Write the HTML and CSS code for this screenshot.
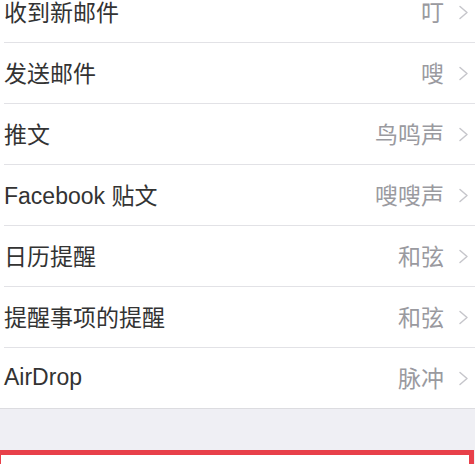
FILE: index.html
```html
<!DOCTYPE html>
<html lang="zh-CN">
<head>
<meta charset="utf-8">
<link rel="stylesheet" href="styles.css">
</head>
<body>
<div class="list">
  <div class="row"><span class="label">收到新邮件</span><span class="value">叮</span><svg class="chev" width="11" height="15" viewBox="0 0 11 15"><polyline points="2,1.5 9,7.5 2,13.5"/></svg></div>
  <div class="row"><span class="label">发送邮件</span><span class="value">嗖</span><svg class="chev" width="11" height="15" viewBox="0 0 11 15"><polyline points="2,1.5 9,7.5 2,13.5"/></svg></div>
  <div class="row"><span class="label">推文</span><span class="value">鸟鸣声</span><svg class="chev" width="11" height="15" viewBox="0 0 11 15"><polyline points="2,1.5 9,7.5 2,13.5"/></svg></div>
  <div class="row"><span class="label">Facebook 贴文</span><span class="value">嗖嗖声</span><svg class="chev" width="11" height="15" viewBox="0 0 11 15"><polyline points="2,1.5 9,7.5 2,13.5"/></svg></div>
  <div class="row"><span class="label">日历提醒</span><span class="value">和弦</span><svg class="chev" width="11" height="15" viewBox="0 0 11 15"><polyline points="2,1.5 9,7.5 2,13.5"/></svg></div>
  <div class="row"><span class="label">提醒事项的提醒</span><span class="value">和弦</span><svg class="chev" width="11" height="15" viewBox="0 0 11 15"><polyline points="2,1.5 9,7.5 2,13.5"/></svg></div>
  <div class="row last"><span class="label">AirDrop</span><span class="value">脉冲</span><svg class="chev" width="11" height="15" viewBox="0 0 11 15"><polyline points="2,1.5 9,7.5 2,13.5"/></svg></div>
</div>
<div class="gap"></div>
<div class="highlight"></div>
</body>
</html>
```
FILE: styles.css
```css
html, body {
  margin: 0;
  padding: 0;
  background: #efeff4;
  overflow: hidden;
  height: 464px;
}
body {
  font-family: "Liberation Sans", "Noto Sans CJK SC", sans-serif;
  font-size: 23px;
  font-weight: 400;
}
.list {
  margin-top: -18px;
  background: #ffffff;
  border-bottom: 1px solid #dcdce0;
}
.row {
  height: 61px;
  box-sizing: border-box;
  margin-left: 4px;
  padding-right: 6px;
  padding-bottom: 2px;
  display: flex;
  align-items: center;
  border-bottom: 1px solid #e2e2e6;
}
.row.last {
  border-bottom: none;
  height: 60px;
}
.label {
  flex: 1;
  color: #333333;
  white-space: nowrap;
}
.value {
  color: #9a9a9f;
  margin-right: 14px;
  white-space: nowrap;
}
.chev {
  display: block;
  margin-top: 2px;
  fill: none;
  stroke: #c6c6cb;
  stroke-width: 1.5;
  stroke-linecap: round;
  stroke-linejoin: round;
}
.gap {
  height: 41px;
}
.highlight {
  margin-left: -4px;
  margin-right: 1px;
  height: 60px;
  border: 5px solid #e8404a;
  border-bottom: none;
  background: #ffffff;
}
```
